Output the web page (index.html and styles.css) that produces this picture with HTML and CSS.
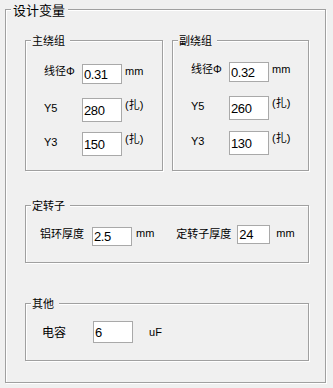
FILE: index.html
```html
<!DOCTYPE html>
<html lang="zh-CN">
<head>
<meta charset="utf-8">
<title>设计变量</title>
<link rel="stylesheet" href="styles.css">
</head>
<body>
<fieldset class="group outer">
  <legend class="outer-title">设计变量</legend>
  <div class="outer-body">
    <div class="winding-row">
      <fieldset class="group winding main">
        <legend class="title">主绕组</legend>
        <div class="winding-body">
          <div class="field first">
            <span class="label">线径Φ</span>
            <input class="box" type="text" value="0.31">
            <span class="unit">mm</span>
          </div>
          <div class="field y5">
            <span class="label latin">Y5</span>
            <input class="box tall" type="text" value="280">
            <span class="unit">(扎)</span>
          </div>
          <div class="field y3">
            <span class="label latin">Y3</span>
            <input class="box tall" type="text" value="150">
            <span class="unit">(扎)</span>
          </div>
        </div>
      </fieldset>
      <fieldset class="group winding side">
        <legend class="title">副绕组</legend>
        <div class="winding-body">
          <div class="field first">
            <span class="label">线径Φ</span>
            <input class="box" type="text" value="0.32">
            <span class="unit">mm</span>
          </div>
          <div class="field y5">
            <span class="label latin">Y5</span>
            <input class="box tall" type="text" value="260">
            <span class="unit">(扎)</span>
          </div>
          <div class="field y3">
            <span class="label latin">Y3</span>
            <input class="box tall" type="text" value="130">
            <span class="unit">(扎)</span>
          </div>
        </div>
      </fieldset>
    </div>

    <fieldset class="group stator">
      <legend class="title">定转子</legend>
      <div class="stator-body">
        <span class="cjk-label">铝环厚度</span>
        <input class="box ring" type="text" value="2.5">
        <span class="unit mm1">mm</span>
        <span class="cjk-label second">定转子厚度</span>
        <input class="box core" type="text" value="24">
        <span class="unit mm2">mm</span>
      </div>
    </fieldset>

    <fieldset class="group other">
      <legend class="title">其他</legend>
      <div class="other-body">
        <span class="cap-label">电容</span>
        <input class="box cap" type="text" value="6">
        <span class="unit uf">uF</span>
      </div>
    </fieldset>
  </div>
</fieldset>
</body>
</html>
```

FILE: styles.css
```css
* {
  box-sizing: border-box;
}

html,
body {
  margin: 0;
  background: #f0f0f0;
}

body {
  width: 333px;
  height: 388px;
  overflow: hidden;
  font-family: "Liberation Sans", "Noto Sans CJK SC", sans-serif;
  color: #000;
}

.group {
  margin: 0;
  padding: 0;
  min-width: 0;
  border: 1px solid #a0a0a0;
  box-shadow: inset 1px 1px 0 #fff, 1px 1px 0 #fff;
}

.outer {
  margin-left: 5px;
  width: 321px;
}

.outer-title {
  margin-left: 5px;
  padding: 0 3px 0 2px;
  font: 13px/19px "Noto Sans CJK SC", sans-serif;
  background: #f0f0f0;
}

.title {
  margin-left: 5px;
  padding: 0 5px 0 1px;
  font: 11px/17px "Noto Sans CJK SC", sans-serif;
  background: #f0f0f0;
}

.outer-body {
  display: flex;
  flex-direction: column;
  padding: 13px 0 21px 19px;
}

.winding-row {
  display: flex;
  gap: 9px;
}

.main {
  width: 138px;
}

.side {
  width: 137px;
}

.winding-body {
  display: flex;
  flex-direction: column;
  padding: 15px 0 14px 18px;
}

.side .winding-body {
  padding-top: 13px;
  padding-bottom: 15px;
}

.field {
  display: flex;
  align-items: flex-start;
}

.field.y5 {
  margin-top: 14px;
}

.field.y3 {
  margin-top: 10px;
}

.side .field.y3 {
  margin-top: 11px;
}

.label {
  flex: none;
  width: 38px;
  font-size: 11px;
  line-height: 14px;
}

.label.latin {
  margin-top: 3px;
}

.unit {
  flex: none;
  margin-left: 3px;
  font-size: 11px;
  line-height: 14px;
}

.box {
  flex: none;
  width: 40px;
  height: 20px;
  margin: 0;
  padding: 0 0 0 1px;
  border: 1px solid #a9a9a9;
  background: #fff;
  color: #000;
  font: 13px "Liberation Sans", sans-serif;
  letter-spacing: -0.4px;
  outline: none;
}

.box.tall {
  height: 24px;
}

.stator {
  margin-top: 26px;
  width: 284px;
}

.stator-body {
  display: flex;
  align-items: flex-start;
  height: 21px;
  box-sizing: content-box;
  padding: 11px 0 16px 14px;
}

.cjk-label {
  flex: none;
  margin-top: 1px;
  font: 11px/15px "Noto Sans CJK SC", sans-serif;
}

.cjk-label.second {
  margin-left: 22px;
}

.box.ring {
  margin-top: 2px;
  margin-left: 8px;
  height: 19px;
}

.unit.mm1 {
  margin-left: 4px;
  margin-top: 1px;
}

.box.core {
  margin-left: 6px;
  width: 33px;
  height: 19px;
}

.unit.mm2 {
  margin-left: 6px;
  margin-top: 1px;
}

.other {
  margin-top: 32px;
  width: 284px;
}

.other-body {
  display: flex;
  align-items: flex-start;
  height: 22px;
  box-sizing: content-box;
  padding: 9px 0 17px 16px;
}

.cap-label {
  flex: none;
  margin-top: 3px;
  font: 12px/16px "Noto Sans CJK SC", sans-serif;
}

.box.cap {
  margin-left: 27px;
  height: 22px;
}

.unit.uf {
  margin-left: 16px;
  margin-top: 4px;
}
```
